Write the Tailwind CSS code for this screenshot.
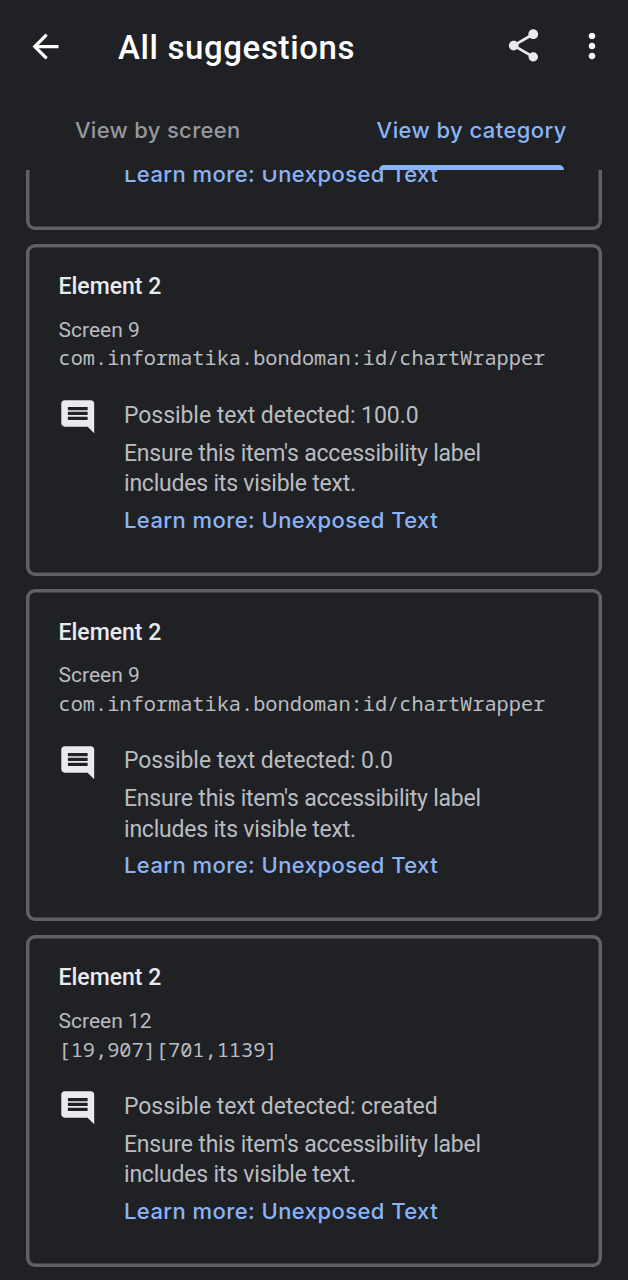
<!DOCTYPE html>
<html lang="en">
<head>
<meta charset="utf-8">
<title>All suggestions</title>
<script src="https://cdn.jsdelivr.net/npm/@tailwindcss/browser@4"></script>
</head>
<body class="bg-[#202125] font-['Roboto',sans-serif]">
<div class="flex h-[1280px] w-[628px] flex-col overflow-hidden bg-[#202125]">
  <header class="h-[170px] shrink-0">
    <div class="flex h-[92px] items-center pl-[26px] pr-4">
      <svg class="size-[39px] shrink-0 fill-white" viewBox="0 0 24 24"><path d="M20 11H7.83l5.59-5.59L12 4l-8 8 8 8 1.41-1.41L7.83 13H20v-2z"/></svg>
      <h1 class="ml-[53px] flex-1 pt-[3px] text-[33px] leading-[40px] font-medium text-white"><span class="whitespace-nowrap tracking-[0.62px]">All suggestions</span></h1>
      <svg class="mr-[29px] mb-[2px] size-[39px] shrink-0 fill-[#e8eaed]" viewBox="0 0 24 24"><path d="M18 16.08c-.76 0-1.44.3-1.96.77L8.91 12.7c.05-.23.09-.46.09-.7s-.04-.47-.09-.7l7.05-4.11c.54.5 1.25.81 2.04.81 1.66 0 3-1.34 3-3s-1.34-3-3-3-3 1.34-3 3c0 .24.04.47.09.7L8.04 9.81C7.5 9.31 6.79 9 6 9c-1.66 0-3 1.34-3 3s1.34 3 3 3c.79 0 1.5-.31 2.04-.81l7.12 4.16c-.05.21-.08.43-.08.65 0 1.61 1.31 2.92 2.92 2.92s2.92-1.31 2.92-2.92-1.31-2.92-2.92-2.92z"/></svg>
      <svg class="size-[40px] shrink-0 fill-white" viewBox="0 0 24 24"><path d="M12 8c1.1 0 2-.9 2-2s-.9-2-2-2-2 .9-2 2 .9 2 2 2zm0 2c-1.1 0-2 .9-2 2s.9 2 2 2 2-.9 2-2-.9-2-2-2zm0 6c-1.1 0-2 .9-2 2s.9 2 2 2 2-.9 2-2-.9-2-2-2z"/></svg>
    </div>
    <nav class="grid h-[78px] grid-cols-2 font-['Inter',sans-serif] text-[22px] leading-[30px] font-medium">
      <div class="flex justify-center pt-[23px] pl-[1.5px] text-[#95989c]"><span class="whitespace-nowrap tracking-[0.32px]">View by screen</span></div>
      <div class="relative flex justify-center pt-[23px] pl-[1.5px] text-[#8ab4f8]"><span class="whitespace-nowrap tracking-[0.42px]">View by category</span>
        <span class="absolute bottom-0 left-[65px] h-[5px] w-[185px] rounded-t-[5px] bg-[#8ab4f8]"></span>
      </div>
    </nav>
  </header>
  <main class="flex min-h-0 flex-1 flex-col overflow-hidden px-[26px]">
    <div class="-mt-[30px] flex flex-col gap-[13.6px]" id="list">
      <article class="h-[90px] shrink-0 rounded-[9px] pt-[19px] pl-[98px] shadow-[inset_0_0_0_3.5px_#5f6165]">
        <p class="font-['Inter',sans-serif] text-[22px] leading-[30px] font-medium text-[#8ab4f8]"><span class="whitespace-nowrap tracking-[0.43px]">Learn more: Unexposed Text</span></p>
      </article>
    </div>
  </main>
</div>
<template id="card">
  <article class="h-[332px] shrink-0 rounded-[9px] pt-[28.4px] pl-[32.5px] text-[#b9bcc1] shadow-[inset_0_0_0_3.5px_#5f6165]">
    <h2 class="text-[23px] leading-[30px] font-medium text-[#e8eaed]"><span class="whitespace-nowrap">Element 2</span></h2>
    <p class="mt-[13.6px] text-[21px] leading-[29px]"><span data-f="screen" class="whitespace-nowrap"></span></p>
    <p class="-mt-[1.2px] font-['Noto_Sans_Mono','DejaVu_Sans_Mono',monospace] text-[20.3px] leading-[29px]"><span data-f="id" class="whitespace-nowrap"></span></p>
    <div class="mt-[24.7px] flex">
      <svg class="-ml-[0.5px] size-[39.5px] shrink-0 fill-[#e8eaed]" viewBox="0 0 24 24"><path d="M21.99 4c0-1.1-.89-2-1.99-2H4c-1.1 0-2 .9-2 2v12c0 1.1.9 2 2 2h14l4 4-.01-18zM18 14H6v-2h12v2zm0-3H6V9h12v2zm0-3H6V6h12v2z"/></svg>
      <div class="ml-[26.5px] pt-[3.5px] text-[23px] leading-[30px]">
        <p><span data-f="text" class="whitespace-nowrap tracking-[-0.06px]"></span></p>
        <p class="mt-[8px] h-[60px] leading-[30.5px] tracking-[-0.21px]"><span class="whitespace-nowrap">Ensure this item's accessibility label</span><br><span class="whitespace-nowrap">includes its visible text.</span></p>
        <p class="mt-[6.2px] font-['Inter',sans-serif] text-[22px] font-medium text-[#8ab4f8]"><span class="whitespace-nowrap tracking-[0.43px]">Learn more: Unexposed Text</span></p>
      </div>
    </div>
  </article>
</template>
<script>
const items = [
  ["Screen 9", "com.informatika.bondoman:id/chartWrapper", "Possible text detected: 100.0"],
  ["Screen 9", "com.informatika.bondoman:id/chartWrapper", "Possible text detected: 0.0"],
  ["Screen 12", "[19,907][701,1139]", "Possible text detected: created"]
];
for (const [screen, id, text] of items) {
  const n = document.getElementById("card").content.cloneNode(true);
  n.querySelector('[data-f=screen]').textContent = screen;
  n.querySelector('[data-f=id]').textContent = id;
  n.querySelector('[data-f=text]').textContent = text;
  document.getElementById("list").appendChild(n);
}
</script>
</body>
</html>
